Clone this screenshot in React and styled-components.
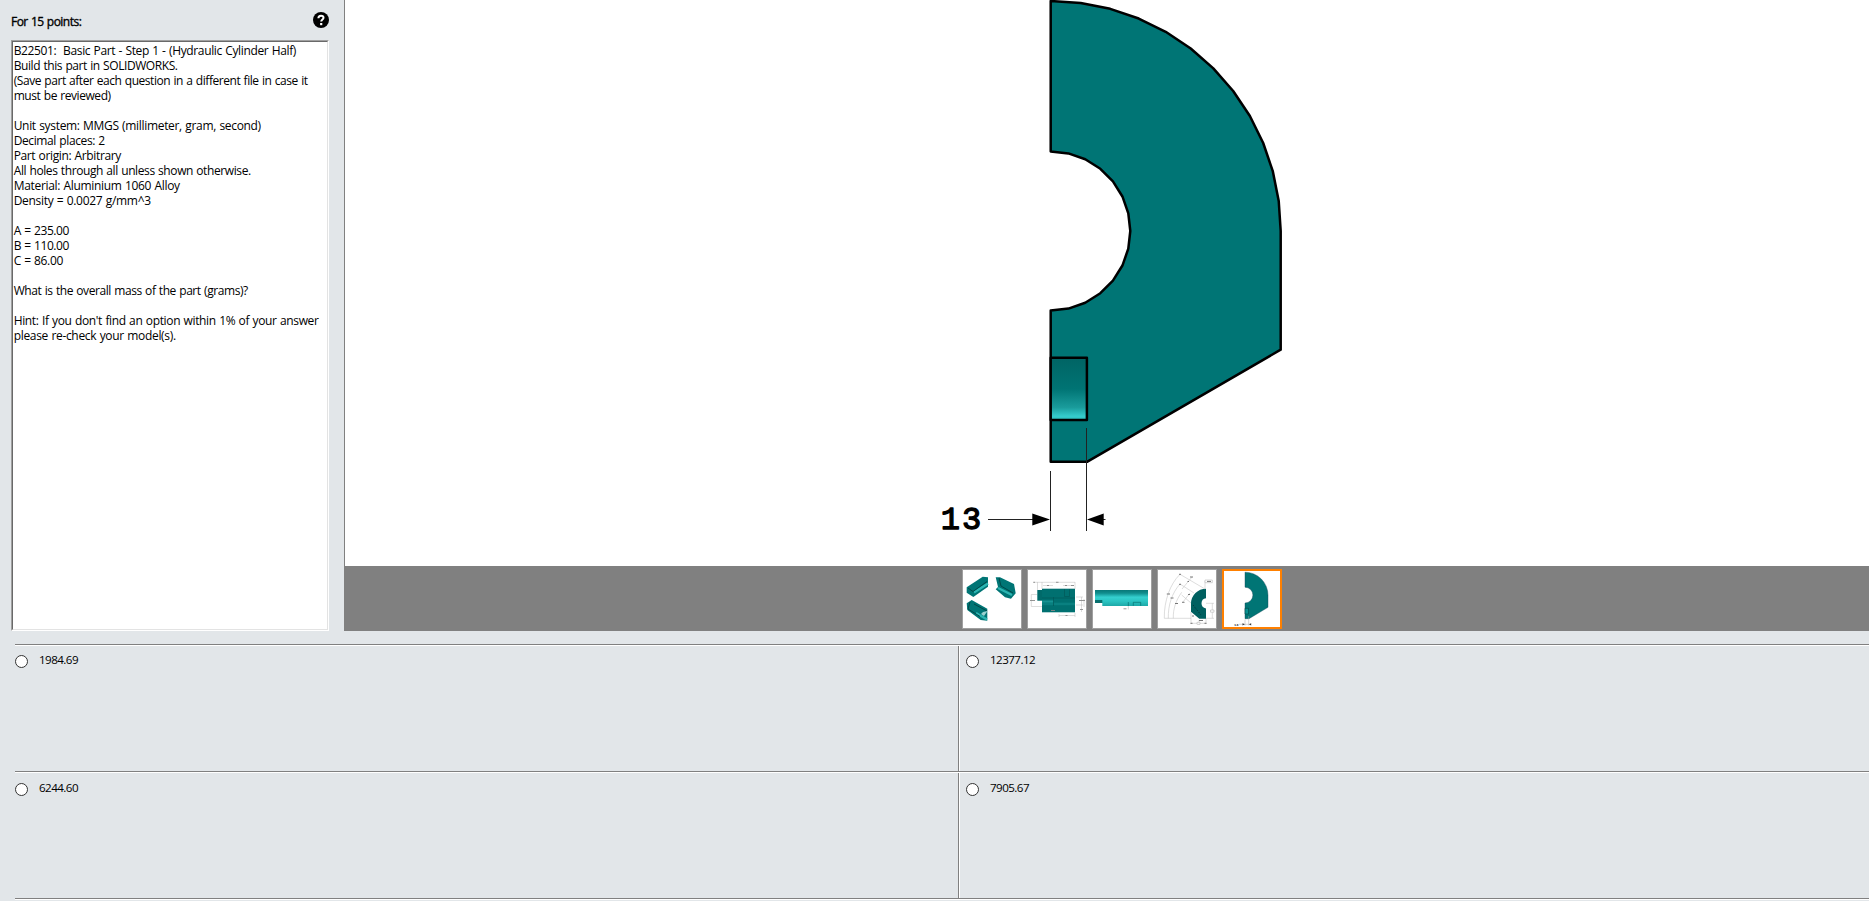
import React, { Component } from "react";
import styled, { createGlobalStyle } from "styled-components";

const question = [
  {
    text: "B22501:  Basic Part - Step 1 - (Hydraulic Cylinder Half)",
    tracking: -0.36,
  },
  { text: "Build this part in SOLIDWORKS.", tracking: -0.42 },
  {
    text: "(Save part after each question in a different file in case it",
    tracking: -0.44,
  },
  { text: "must be reviewed)", tracking: -0.43 },
  { text: "" },
  { text: "Unit system: MMGS (millimeter, gram, second)", tracking: -0.32 },
  { text: "Decimal places: 2", tracking: -0.39 },
  { text: "Part origin: Arbitrary", tracking: -0.37 },
  { text: "All holes through all unless shown otherwise.", tracking: -0.4 },
  { text: "Material: Aluminium 1060 Alloy", tracking: -0.32 },
  { text: "Density = 0.0027 g/mm^3", tracking: -0.31 },
  { text: "" },
  { text: "A = 235.00", tracking: -0.4 },
  { text: "B = 110.00", tracking: -0.43 },
  { text: "C = 86.00", tracking: -0.36 },
  { text: "" },
  { text: "What is the overall mass of the part (grams)?", tracking: -0.42 },
  { text: "" },
  {
    text: "Hint: If you don't find an option within 1% of your answer",
    tracking: -0.35,
  },
  { text: "please re-check your model(s).", tracking: -0.32 },
];

const answers = ["1984.69", "12377.12", "6244.60", "7905.67"];

// CAD arcs are tessellated, so build them from straight segments
const arcPoints = (cx, cy, r, from, to, steps) => {
  const points = [];
  for (let i = 0; i <= steps; i++) {
    const angle = ((from + ((to - from) * i) / steps) * Math.PI) / 180;
    points.push(
      `${(cx + r * Math.sin(angle)).toFixed(2)},${(
        cy -
        r * Math.cos(angle)
      ).toFixed(2)}`
    );
  }
  return points.join(" ");
};

export default class App extends Component {
  constructor(props) {
    super(props);
    this.state = { answer: null };
  }

  renderQuestion = () => {
    return (
      <StyledSidebar>
        <StyledSidebarHeader>
          <StyledPoints>For 15 points:</StyledPoints>
          <HelpIcon />
        </StyledSidebarHeader>
        <StyledQuestionBox>
          <StyledQuestionInner>
            {question.map((line, index) => (
              <StyledLine key={index} $tracking={line.tracking}>
                {line.text}
              </StyledLine>
            ))}
          </StyledQuestionInner>
        </StyledQuestionBox>
      </StyledSidebar>
    );
  };

  renderViewer = () => {
    return (
      <StyledViewer>
        <StyledCanvas>
          <PartDrawing />
        </StyledCanvas>
        <StyledThumbnailBar>
          <StyledThumbnail>
            <IsometricThumb />
          </StyledThumbnail>
          <StyledThumbnail>
            <FrontThumb />
          </StyledThumbnail>
          <StyledThumbnail>
            <TopThumb />
          </StyledThumbnail>
          <StyledThumbnail>
            <AnglesThumb />
          </StyledThumbnail>
          <StyledThumbnail $selected>
            <SideThumb />
          </StyledThumbnail>
        </StyledThumbnailBar>
      </StyledViewer>
    );
  };

  renderAnswers = () => {
    return (
      <StyledAnswers>
        {answers.map((answer, index) => (
          <StyledAnswer
            key={answer}
            $right={index % 2 === 1}
            $offset={index > 1 ? 1 : 0}
          >
            <StyledRadio
              type="radio"
              name="answer"
              checked={this.state.answer === answer}
              onChange={() => this.setState({ answer })}
            />
            <StyledAnswerText>{answer}</StyledAnswerText>
          </StyledAnswer>
        ))}
      </StyledAnswers>
    );
  };

  render = () => {
    return (
      <StyledPage>
        <GlobalStyle />
        <StyledTop>
          {this.renderQuestion()}
          {this.renderViewer()}
        </StyledTop>
        {this.renderAnswers()}
      </StyledPage>
    );
  };
}

const HelpIcon = () => (
  <svg width="16" height="16" viewBox="0 0 16 16">
    <circle cx="8" cy="8" r="8" fill="#000" />
    <path
      d="M5.4 6.2C5.4 4.5 6.5 3.7 8 3.7s2.5.9 2.5 2.1c0 1.6-2.3 1.8-2.3 3.8"
      fill="none"
      stroke="#fff"
      strokeWidth="2"
    />
    <rect x="7.1" y="11" width="2.2" height="2.2" fill="#fff" />
  </svg>
);

const PartDrawing = () => (
  <svg width="1524" height="566" viewBox="345 0 1524 566">
    <defs>
      <linearGradient id="pocket" x1="0" y1="0" x2="0" y2="1">
        <stop offset="0" stopColor="#006464" />
        <stop offset="0.5" stopColor="#007474" />
        <stop offset="0.8" stopColor="#1a9c9c" />
        <stop offset="0.94" stopColor="#35cccc" />
        <stop offset="1" stopColor="#2bbcbc" />
      </linearGradient>
    </defs>
    <polygon
      points={`${arcPoints(1050.7, 231, 230, 0, 90, 12)} 1280.7,349.7 1087,461.8 1050.7,461.8 ${arcPoints(
        1050.7,
        231,
        79.6,
        180,
        0,
        14
      )}`}
      fill="#007575"
      stroke="#000"
      strokeWidth="2.5"
      strokeLinejoin="round"
    />
    <rect
      x="1050.7"
      y="357.8"
      width="36.2"
      height="62.2"
      fill="url(#pocket)"
      stroke="#000"
      strokeWidth="2.5"
      strokeLinejoin="round"
    />
    <path
      d="M1050.5 471V531M1086.5 428V531M988 519.5H1040M1095 519.5H1105.5"
      stroke="#222"
    />
    <path d="M1050 519.5L1032.3 513.5V525.5ZM1087 519.5L1103.7 513.5V525.5Z" />
    <text
      x="940.8"
      y="528.6"
      fontFamily='"Liberation Mono", monospace'
      fontSize="32"
      stroke="#000"
      strokeWidth="1.3"
      strokeLinejoin="round"
      letterSpacing="2"
    >
      13
    </text>
  </svg>
);

const IsometricThumb = () => (
  <svg width="58" height="58" viewBox="1 1 58 58">
    <g fill="#007575">
      <path d="M4.7 18.3L20.7 7.7L26 8.3V17.7L11.3 28L4.7 23.7Z" />
      <path d="M33.7 8.3H38L52 15L53.7 24.3L49 29.7L43 28.3L33.7 20.3L36 18Z" />
      <path d="M4.7 34.3L9.7 31L25.3 39.7V51.7L18.7 51L5.3 41Z" />
    </g>
    <path
      d="M12 23.5L26 14.5M36 19L50 26M14 44L25 50.5"
      stroke="#2cb5b2"
      strokeWidth="2.4"
    />
    <path
      d="M6 19L11 22.5L25 12.5M37 9L39 17L51 24M8 33L6 40L18 47.5M12 35L25 42"
      stroke="#004848"
      strokeWidth="1"
      fill="none"
    />
    <path d="M21 43L25.5 42L22 47L19 45Z" fill="#9bd2d0" />
  </svg>
);

const FrontThumb = () => (
  <svg width="58" height="58" viewBox="1 1 58 58">
    <rect x="10.3" y="21" width="5" height="10.7" fill="#006a6a" />
    <rect x="15" y="19.7" width="33" height="23.6" fill="#007070" />
    <rect x="15" y="31.5" width="11.5" height="2.2" fill="#169393" />
    <rect x="15" y="33.7" width="33" height="2.5" fill="#098080" />
    <path
      d="M26.5 28V37M37.5 20V27.5H42.5V20M15 29H48"
      stroke="#005757"
      fill="none"
      strokeWidth="0.7"
    />
    <path
      d="M6.3 13.3H48M10.5 13V21M15 13V20M48 13V20M16 16.5H26M36 16.5H47M4.3 25.5V37.5M4.3 25.5H10M4.3 37.5H15M49 28H56M49 36H56M54.5 28V43M57 30V38M32 46.5H48M32 45V48M48 44V48"
      stroke="#bbb"
      strokeWidth="0.5"
      fill="none"
    />
    <path
      d="M29 13.3H31.5M20 16.5H22M38 16.5H40M44 16.5H47M3 31.5H8M52 31.5H58M53 40.5H56M38.5 46.5H40.5M6.3 13.3H8M24 41.5H28"
      stroke="#888"
      strokeWidth="0.9"
    />
  </svg>
);

const TopThumb = () => (
  <svg width="58" height="58" viewBox="1 1 58 58">
    <defs>
      <linearGradient id="cylinder" x1="0" y1="0" x2="0" y2="1">
        <stop offset="0" stopColor="#087878" />
        <stop offset="0.2" stopColor="#108e8e" />
        <stop offset="0.45" stopColor="#35d0cf" />
        <stop offset="0.7" stopColor="#2bc4c2" />
        <stop offset="1" stopColor="#1da8a7" />
      </linearGradient>
    </defs>
    <path d="M3 21H56V37H10.3V34H3Z" fill="url(#cylinder)" />
    <path d="M3 31H10.3V34H3Z" fill="#08706f" />
    <path
      d="M41.3 36.8V33.3H48.7V36.8M36.3 33V37"
      stroke="#066"
      fill="none"
      strokeWidth="0.6"
    />
    <path d="M36.3 37V40.5" stroke="#bbb" strokeWidth="0.6" />
    <path d="M31.5 39.8H34.5" stroke="#999" strokeWidth="1" />
  </svg>
);

const AnglesThumb = () => (
  <svg width="58" height="58" viewBox="1 1 58 58">
    <path
      d="M49 19.7A15 15 0 0 0 34 34.5V42.7L42.3 49.7H49V39.5A5.2 5.2 0 0 1 49 29.2Z"
      fill="#006060"
    />
    <path
      d="M23 5.3C13 15 7 32 7.3 49.3M23 15C15 24 11 36 11.3 49.3M24.7 23.3C19 31 16 40 16.3 49.3M7.3 49.3H34M23 5.3L48 20M23 15L37 24M24.7 26L34 34M35 8L25 20M26 33L33 24M48 19V12M55.3 34.3V49.3M49 49.3H57M49 34.3H57M34 43V55M49 50V55M34 54.3H49M42 51V56"
      stroke="#bbb"
      strokeWidth="0.5"
      fill="none"
    />
    <path
      d="M48 11H55.3V13.7H48ZM53.5 41H57V43.2H53.5ZM40 53.3H43V55.3H40Z"
      fill="#fff"
      stroke="#aaa"
      strokeWidth="0.5"
    />
    <path
      d="M22 5.3H24M33 8H36M22 15.3H24M30.5 12.5H32M9.8 25H13M13.5 29H16.5M18 34.5H21M25 33.3H27.5M31 25.5H33M50 12.4H54M35 47H37M42 51.5H46M33.5 54.3H35.5M47.5 54.3H49.5"
      stroke="#777"
      strokeWidth="1"
    />
    <path d="M36 36L44 46" stroke="#003c3c" strokeDasharray="1.5 1.5" />
  </svg>
);

const SideThumb = () => (
  <svg width="56" height="56" viewBox="2 2 56 56">
    <path
      d="M23 3.2A23 23 0 0 1 46 26.2V38.3L27 49.7H23V34A7.9 7.9 0 0 0 23 18.2Z"
      fill="#007575"
      stroke="#145"
      strokeWidth="0.4"
    />
    <path d="M23 39.3H26.5V45H23Z" fill="#089090" stroke="#044" strokeWidth="0.6" />
    <path
      d="M17 55.3H29M23 50.5V56.5M26.7 47V56.5"
      stroke="#aaa"
      strokeWidth="0.5"
    />
    <path
      d="M20.5 54.2L22.8 55.3L20.5 56.4ZM29.2 54.2L27 55.3L29.2 56.4Z"
      fill="#333"
    />
    <text
      x="12"
      y="56.8"
      fill="#333"
      fontFamily='"Liberation Mono", monospace'
      fontSize="3.8"
      fontWeight="700"
    >
      13
    </text>
  </svg>
);

const GlobalStyle = createGlobalStyle`
  body {
    margin: 0;
    overflow: hidden;
    background: #e2e6e9;
    color: #000;
    font: 12px/15px "Open Sans", sans-serif;
  }
  svg {
    display: block;
  }
`;

const StyledPage = styled.div`
  display: flex;
  flex-direction: column;
  height: 901px;
  overflow: hidden;
`;

const StyledTop = styled.div`
  display: flex;
  height: 631px;
`;

const StyledSidebar = styled.div`
  box-sizing: border-box;
  width: 344px;
  padding: 0 15px 0 11px;
  display: flex;
  flex-direction: column;
`;

const StyledSidebarHeader = styled.div`
  display: flex;
  justify-content: space-between;
  align-items: center;
  height: 40px;
`;

const StyledPoints = styled.div`
  padding-top: 3px;
  letter-spacing: -0.52px;
  word-spacing: 0.6px;
  -webkit-text-stroke: 0.35px #000;
`;

const StyledQuestionBox = styled.div`
  flex: 1;
  display: flex;
  border: 1px solid;
  border-color: #a0a0a0 #fff #fff #a0a0a0;
`;

const StyledQuestionInner = styled.div`
  flex: 1;
  padding: 1px 0 0 0.7px;
  background: #fff;
  border: 1px solid;
  border-color: #696969 #e3e3e3 #e3e3e3 #696969;
`;

const StyledLine = styled.div`
  height: 15px;
  white-space: pre;
  word-spacing: 0.6px;
  letter-spacing: ${(props) => props.$tracking || 0}px;
`;

const StyledViewer = styled.div`
  flex: 1;
  display: flex;
  flex-direction: column;
`;

const StyledCanvas = styled.div`
  height: 566px;
  background: #fff;
  border-left: 1px solid #808080;
`;

const StyledThumbnailBar = styled.div`
  flex: 1;
  display: flex;
  justify-content: center;
  gap: 5px;
  padding: 3px 0 0 31px;
  background: #808080;
`;

const StyledThumbnail = styled.div`
  box-sizing: border-box;
  width: 60px;
  height: 60px;
  background: #fff;
  border: ${(props) =>
    props.$selected ? "2px solid #ff8000" : "1px solid #a0a0a0"};
  :hover {
    cursor: pointer;
  }
`;

const StyledAnswers = styled.div`
  display: grid;
  grid-template-columns: 943px 1fr;
  grid-auto-rows: 127px;
  margin: 13px 0 0 15px;
  border-bottom: 1px solid #808080;
  box-shadow: 0 1px #fff;
`;

const StyledAnswer = styled.label`
  display: flex;
  align-items: flex-start;
  border-top: 1px solid #808080;
  box-shadow: inset 0 1px #fff${(props) =>
    props.$right ? ", inset 1px 0 #808080, inset 2px 0 #fff" : ""};
  padding: ${(props) => 7 + props.$offset}px 0 0
    ${(props) => (props.$right ? 8 : 0)}px;
`;

const StyledRadio = styled.input`
  appearance: none;
  box-sizing: border-box;
  width: 13px;
  height: 13px;
  margin: 3px 11px 0 0;
  border: 1px solid #333;
  border-radius: 50%;
  background: #fff;
  &:checked {
    background: radial-gradient(#333 0 3px, #fff 4px);
  }
`;

const StyledAnswerText = styled.span`
  font-size: 11.6px;
  letter-spacing: -0.55px;
`;
